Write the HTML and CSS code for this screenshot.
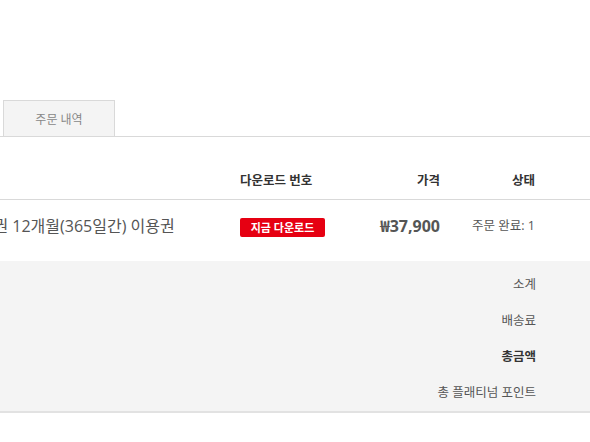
FILE: index.html
```html
<!DOCTYPE html>
<html lang="ko">
<head>
<meta charset="utf-8">
<link rel="stylesheet" href="styles.css">
</head>
<body>
<div class="page">
  <div class="tabs">
    <div class="tab">주문 내역</div>
  </div>
  <div class="order">
    <div class="row head">
      <div class="c-name"></div>
      <div class="c-dl">다운로드 번호</div>
      <div class="c-price">가격</div>
      <div class="c-status">상태</div>
    </div>
    <div class="row item">
      <div class="c-name"><span class="name">이용권 12개월(365일간) 이용권</span></div>
      <div class="c-dl"><span class="btn">지금 다운로드</span></div>
      <div class="c-price price">₩37,900</div>
      <div class="c-status status">주문 완료: 1</div>
    </div>
    <div class="summary">
      <div class="sum-row">소계</div>
      <div class="sum-row">배송료</div>
      <div class="sum-row total">총금액</div>
      <div class="sum-row">총 플래티넘 포인트</div>
    </div>
  </div>
</div>
</body>
</html>
```
FILE: styles.css
```css
html, body {
  margin: 0;
  padding: 0;
  background: #fff;
  overflow: hidden;
}
body {
  font-family: "Open Sans", "Noto Sans CJK KR", sans-serif;
  color: #555;
  width: 590px;
  height: 442px;
}
.page {
  padding-top: 100px;
}
.tabs {
  display: flex;
  padding-left: 3px;
  border-bottom: 1px solid #d9d9d9;
  height: 36px;
}
.tab {
  width: 110px;
  height: 35px;
  border: 1px solid #d9d9d9;
  border-bottom: none;
  background: #f4f4f4;
  color: #888;
  font-size: 12px;
  display: flex;
  align-items: center;
  justify-content: center;
}
.row {
  display: grid;
  grid-template-columns: 1fr 120px 80px 95px;
  align-items: center;
}
.head {
  padding: 35px 55px 9px 0;
  height: 18px;
  border-bottom: 1px solid #d9d9d9;
  font-size: 12.5px;
  font-weight: 600;
  color: #333;
  line-height: 18px;
}
.c-price, .c-status {
  text-align: right;
}
.item {
  padding: 12px 55px 29px 0;
  height: 20px;
}
.c-name {
  white-space: nowrap;
}
.name {
  display: inline-block;
  margin-left: -36px;
  font-size: 16px;
  color: #555;
}
.btn {
  display: inline-block;
  background: #e60012;
  color: #fff;
  font-size: 11px;
  font-weight: 700;
  height: 19px;
  line-height: 19px;
  width: 85px;
  text-align: center;
  border-radius: 2px;
  margin-top: 6px;
}
.price {
  font-size: 16px;
  font-weight: 700;
  color: #555;
}
.status {
  font-size: 12.5px;
  color: #555;
}
.summary {
  background: #f4f4f4;
  padding: 6px 54px 0 0;
  height: 144px;
  border-bottom: 2px solid #e2e2e2;
}
.sum-row {
  height: 36px;
  line-height: 36px;
  text-align: right;
  font-size: 12.5px;
  color: #555;
}
.sum-row.total {
  font-weight: 700;
  color: #333;
}
```
